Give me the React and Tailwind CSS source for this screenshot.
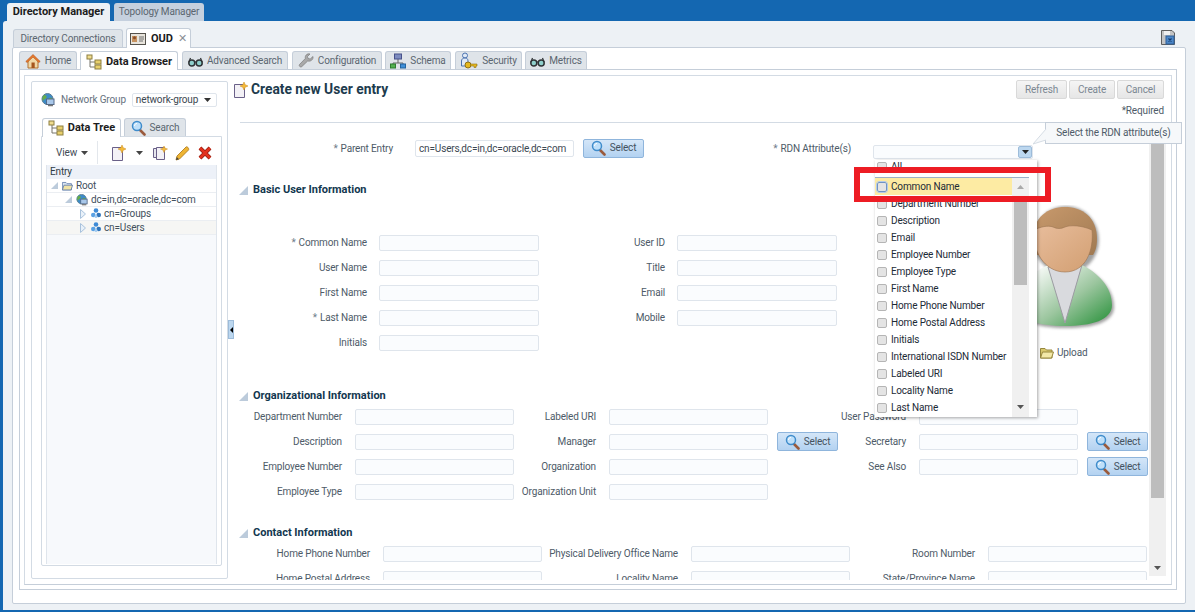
import React from "react";

const Caret = ({ className = "" }) => (
  <svg width="7" height="4" viewBox="0 0 7 4" className={className}><path d="M0 0h7L3.5 4z" fill="currentColor" /></svg>
);

const House = () => (
  <svg width="16" height="16" viewBox="0 0 16 16">
    <path d="M3 8v7h10V8L8 3z" fill="#f0d8a8" stroke="#b3702c" />
    <path d="M0.8 8.5 8 1.5l7.2 7-1.4 1L8 4 2.2 9.5z" fill="#e8792b" stroke="#b0521c" strokeWidth=".6" />
    <rect x="6.5" y="9.5" width="3.2" height="5.5" fill="#a5561e" />
  </svg>
);

const TreeIcon = () => (
  <svg width="16" height="16" viewBox="0 0 16 16">
    <path d="M4 4v9h5M4 8h5" fill="none" stroke="#77746a" />
    <rect x="1" y="1" width="5" height="4" fill="#efdc8e" stroke="#8d7f40" />
    <rect x="9" y="6" width="6" height="4" fill="#e7cf6c" stroke="#8d7f40" />
    <rect x="9" y="11" width="6" height="4" fill="#e7cf6c" stroke="#8d7f40" />
  </svg>
);

const Glasses = () => (
  <svg width="15" height="16" viewBox="0 0 15 16">
    <circle cx="3.8" cy="10" r="3" fill="#8fd0cc" stroke="#2f3336" strokeWidth="1.5" />
    <circle cx="11.2" cy="10" r="3" fill="#8fd0cc" stroke="#2f3336" strokeWidth="1.5" />
    <path d="M1 9 2.5 5M14 9l-1.500-4M6.500 9h2" fill="none" stroke="#2f3336" strokeWidth="1.200" />
  </svg>
);

const Wrench = () => (
  <svg width="16" height="16" viewBox="0 0 16 16">
    <path d="M15 3.500 12.200 6 10 5.500 9.500 3.500 12 1C9 .3 6.800 2.500 7.300 5.500L1.500 11.500c-1 1.200.8 3.200 2.200 2.200L9.700 8C12.800 8.800 15.500 6.500 15 3.500z" fill="#a9a9a9" stroke="#7b7b7b" strokeWidth=".7" />
  </svg>
);

const Network = () => (
  <svg width="16" height="16" viewBox="0 0 16 16">
    <path d="M8 6v4M3 13v-3h10v3" fill="none" stroke="#666" />
    <rect x="4.500" y="1" width="7" height="5" fill="#7d8cc0" stroke="#47518a" />
    <rect x="0.500" y="11" width="5" height="4" fill="#53b04f" stroke="#2d7c30" />
    <rect x="10.500" y="11" width="5" height="4" fill="#3f8fd8" stroke="#22639f" />
  </svg>
);

const Security = () => (
  <svg width="18" height="18" viewBox="0 0 18 18">
    <circle cx="5" cy="3.500" r="2.500" fill="#dfe9f6" stroke="#4a72b0" />
    <path d="M1.500 14V9c0-2 1.500-3 3.500-3s3 1 3 3v5z" fill="#dfe9f6" stroke="#4a72b0" />
    <circle cx="8" cy="13" r="3" fill="#e5b820" stroke="#8f7014" />
    <path d="M10.500 12H17v2h-1v1.500h-2V14h-3.500z" fill="#e5b820" stroke="#8f7014" strokeWidth=".6" />
  </svg>
);

const IdCard = () => (
  <svg width="16" height="12" viewBox="0 0 16 12">
    <rect x=".5" y=".5" width="15" height="11" fill="#e8e4dc" stroke="#55524c" />
    <rect x="2" y="3" width="5" height="6" fill="#c7925f" />
    <circle cx="4.500" cy="4.800" r="1.500" fill="#8a4e2a" />
    <path d="M9 4h5M9 6h5M9 8h4" stroke="#6e6e6e" />
  </svg>
);

const Globe = ({ size = 14 }) => (
  <svg width={size} height={size} viewBox="0 0 14 14">
    <circle cx="6.500" cy="6" r="5.500" fill="#3d8bc9" stroke="#5b7d92" />
    <path d="M3 2c2 0 3 1 2.500 2.500S3 6 2 8C1 6 1 4 3 2zM8 5c2-.5 3 0 3.500 1-.5 2-2 3.500-3 4C7.500 8 7 6.500 8 5z" fill="#66ad4b" />
    <rect x="5.500" y="6" width="7.500" height="5.500" fill="#a9c8ea" stroke="#546b8a" />
    <path d="M7 12.500h5" stroke="#777" strokeWidth="1.500" />
  </svg>
);

const Magnifier = () => (
  <svg width="15" height="16" viewBox="0 0 15 16">
    <path d="m8.500 9.500 5 5" stroke="#9a5a3c" strokeWidth="2.600" strokeLinecap="round" />
    <circle cx="6" cy="6" r="4.500" fill="#bfe0fa" stroke="#3f8ccb" strokeWidth="1.500" />
    <path d="M3.500 6c0-1.500 1-2.500 2.500-2.500" stroke="#fff" fill="none" />
  </svg>
);

const NewDoc = () => (
  <svg width="16" height="16" viewBox="0 0 16 16">
    <path d="M1.500 2.500h10v13h-10z" fill="#f3f1f6" stroke="#6a6088" />
    <path d="m11 0 1.200 2.700L15 4l-2.800 1.200L11 8 9.800 5.200 7 4l2.800-1.300z" fill="#f4b93a" stroke="#c98a1b" strokeWidth=".5" />
  </svg>
);

const CopyDoc = () => (
  <svg width="15" height="15" viewBox="0 0 15 15">
    <path d="M.500 3.500h7v9h-7z" fill="#e6e6ee" stroke="#6a6088" />
    <path d="M3.500 2.500h8v12h-8z" fill="#f3f1f6" stroke="#6a6088" />
    <path d="m11 1 1 2.200L14.500 4l-2.500 1-1 2.500-1-2.500L7.500 4 10 3.200z" fill="#f4b93a" stroke="#c98a1b" strokeWidth=".5" />
  </svg>
);

const Pencil = () => (
  <svg width="16" height="16" viewBox="0 0 16 16">
    <path d="M1 15l1-4 9-9c1-1 3.500 1.500 2.500 3l-9 9z" fill="#eeb433" stroke="#a87518" strokeWidth=".8" />
    <path d="M1 15l.8-3 2.200 2.200z" fill="#444" />
  </svg>
);

const RedX = () => (
  <svg width="14" height="14" viewBox="0 0 14 14">
    <path d="M2 2l10 10M12 2 2 12" stroke="#8f1d10" strokeWidth="4" />
    <path d="M2 2l10 10M12 2 2 12" stroke="#e2311d" strokeWidth="2.600" />
  </svg>
);

const FolderIcon = ({ light }) => (
  <svg width={light ? 11 : 14} height={light ? 10 : 12} viewBox="0 0 14 12">
    <path d="M.500 11V1.500h4.500l1.500 1.500h5.500v8z" fill={light ? "#d8e3ef" : "#d9c96e"} stroke={light ? "#5b78a8" : "#96873d"} />
    <path d="M.500 11l2-6h11l-2 6z" fill={light ? "#f0e3a6" : "#f3e9a8"} stroke={light ? "#5b78a8" : "#96873d"} />
  </svg>
);

const SaveIcon = () => (
  <svg width="14" height="15" viewBox="0 0 14 15">
    <path d="M.500.500h10.500l2.500 2.500v11.500H.500z" fill="#c4c4c4" stroke="#5e5e5e" />
    <rect x="3" y="1" width="6" height="4" fill="#efefef" />
    <rect x="5" y="6" width="8" height="8" fill="#4c86c6" stroke="#2c5f9a" />
    <path d="M7.500 8.500l3 3M10.500 8.500l-3 3" stroke="#123a6e" strokeWidth="1.200" />
  </svg>
);

const Triangle = () => (
  <svg width="9" height="9" viewBox="0 0 9 9"><path d="M9 0v9H0z" fill="#bccbdb" /></svg>
);

const boldText = "font-bold text-[11px] tracking-normal";
const tabBase = "flex items-center gap-[4px] rounded-t-[3px] border border-b-0 whitespace-nowrap";

const Tab = ({ icon, label, active, w, extra = "" }) => (
  <div
    className={`${tabBase} ${w} ${extra} justify-center ${
      active ? `bg-white border-[#c5ced9] ${boldText} text-[#1c1c1c] relative z-10 h-[19px] -mb-px` : "h-[18px] bg-[#dfe4e9] border-[#c5ced9] text-[#5b6670]"
    }`}
  >
    {icon}
    {label}
  </div>
);

const Input = ({ w = "w-[159px]" }) => (
  <div className={`${w} h-[16px] bg-[#fafcfe] border border-[#dfe5ec] rounded-[2px]`} />
);

const SelectBtn = () => (
  <div className="w-[61px] h-[19px] flex items-center justify-center gap-[4px] rounded-[2px] border border-[#8fb5dc] bg-[linear-gradient(#d4e6f8,#b3d2f1)] text-[#44525f]">
    <Magnifier />
    Select
  </div>
);

const Label = ({ children, req, pr = "pr-[13px]" }) => (
  <div className={`${pr} text-right text-[#4e5b68] whitespace-nowrap`}>
    {req && <span className="text-[#6f7d8a] mr-[3px]">*</span>}
    {children}
  </div>
);

const SectionHead = ({ title, className = "" }) => (
  <div className={`flex items-center gap-[5px] h-[14px] pl-[5px] ${boldText} text-[#12374f] ${className}`}>
    <Triangle />
    {title}
  </div>
);

const ActionBtn = ({ label, w }) => (
  <div className={`${w} h-[19px] flex items-center justify-center rounded-[2px] border border-[#d9d9d9] bg-[linear-gradient(#f5f5f5,#e6e6e6)] text-[#7b8792]`}>
    {label}
  </div>
);

const Avatar = () => (
  <svg width="100" height="130" viewBox="0 0 100 130">
    <defs>
      <linearGradient id="bodyGrad" x1="0.1" y1="0.1" x2="1" y2="0.9">
        <stop offset="0" stopColor="#ffffff" />
        <stop offset=".55" stopColor="#9cc69f" />
        <stop offset="1" stopColor="#2f9440" />
      </linearGradient>
      <linearGradient id="faceGrad" x1="0" y1="0" x2="1" y2="1">
        <stop offset="0" stopColor="#e8bd9c" />
        <stop offset="1" stopColor="#d29f72" />
      </linearGradient>
      <linearGradient id="hairGrad" x1="0" y1="0" x2="1" y2="1">
        <stop offset="0" stopColor="#c99a6d" />
        <stop offset="1" stopColor="#a07a52" />
      </linearGradient>
      <filter id="soft" x="-10%" y="-10%" width="120%" height="120%">
        <feGaussianBlur stdDeviation="1.800" />
      </filter>
    </defs>
    <g filter="url(#soft)" fill="#555" opacity=".55">
      <path d="M48 123C20 123 1 117 1 102C1 84 15 70 31 62H65C81 70 96 84 96 102C96 117 76 123 48 123z" />
      <ellipse cx="48" cy="35" rx="33" ry="34" />
    </g>
    <path d="M47 121C20 121 0 115 0 100C0 82 14 68 30 60L47 118L64 60C80 68 94 82 94 100C94 115 74 121 47 121z" fill="url(#bodyGrad)" />
    <path d="M30 62 47 118 64 60z" fill="#d9dade" stroke="#9c9ca2" />
    <path d="M15 34C15 12 30 2 47 2s32 10 32 32c0 8-2 13-4 16H19c-2-4-4-8-4-16z" fill="url(#hairGrad)" />
    <path d="M16 25c6-3 14-5 19-3 4 2 8 2 12 0 5-2 16-2 27 3 2 20-6 42-27 42S14 45 16 25z" fill="url(#faceGrad)" stroke="#9b7350" strokeWidth=".6" />
  </svg>
);

const TreeRow = ({ indent, toggle, icon, label, alt }) => (
  <div className={`flex items-center h-[14px] border-b border-[#ebeef2] whitespace-nowrap text-[#43505c] ${indent} ${alt ? "bg-[#f6f6f4]" : "bg-white"}`}>
    {toggle === "open" ? (
      <svg width="7" height="7" viewBox="0 0 7 7" className="mr-[4px]"><path d="M7 0v7H0z" fill="#bccbdb" /></svg>
    ) : (
      <svg width="6" height="10" viewBox="0 0 6 10" className="mr-[5px]"><path d="M.500.500 5.500 5 .500 9.500z" fill="#e9f1f9" stroke="#a9c2dc" /></svg>
    )}
    {icon}
    <span className="ml-[3px]">{label}</span>
  </div>
);

const Cluster = () => (
  <svg width="10" height="11" viewBox="0 0 10 11">
    <circle cx="5" cy="2.500" r="2.300" fill="#3f8bd6" />
    <circle cx="2.300" cy="7" r="2.300" fill="#5aa1e3" />
    <circle cx="7.700" cy="7" r="2.300" fill="#2f74bb" />
    <circle cx="5" cy="8.500" r="1.500" fill="#a5cdf2" />
  </svg>
);

const rdnOptions = [
  "Department Number", "Description", "Email", "Employee Number", "Employee Type", "First Name",
  "Home Phone Number", "Home Postal Address", "Initials", "International ISDN Number", "Labeled URI",
  "Locality Name", "Last Name",
];

const Check = ({ focus }) => (
  <div className={`w-[10px] h-[10px] shrink-0 rounded-[2px] border bg-[#e4e4e4] ${focus ? "border-[#6f93c4] outline outline-1 outline-[#b6cbe6]" : "border-[#b5b5b5]"}`} />
);

const App = () => {
  return (
    <div className="relative w-[1195px] h-[612px] overflow-hidden bg-[#1467b1] font-['Roboto','Noto_Sans',sans-serif] text-[10px] tracking-[-0.15px] leading-[14px]">
      {/* top tabs */}
      <div className="flex items-end gap-[4px] h-[21px] pl-[7px] whitespace-nowrap">
        <div className={`w-[103px] h-[18px] flex items-center justify-center rounded-t-[3px] bg-[#edf1f5] ${boldText} text-[#1c1c1c]`}>Directory Manager</div>
        <div className="w-[90px] h-[18px] flex items-center justify-center rounded-t-[3px] bg-[#c5d0de] text-[#5b6670]">Topology Manager</div>
      </div>

      <div className="ml-[3px] h-[589px] bg-[#edf1f5] rounded-tl-[3px] pl-[9px] pr-[9px] pt-[7px]">
        {/* connection tabs */}
        <div className="flex items-end h-[19px] gap-[3px] pl-[1px]">
          <Tab label="Directory Connections" w="w-[110px]" />
          <div className={`w-[65px] h-[20px] -mb-px relative z-10 flex items-center justify-center gap-[5px] rounded-t-[3px] border border-b-0 border-[#c5ced9] bg-white ${boldText} text-[#1c1c1c]`}>
            <IdCard />
            OUD
            <span className="text-[#8a8f96] font-normal text-[11px]">✕</span>
          </div>
          <div className="ml-auto mr-[11px] mb-[2px]"><SaveIcon /></div>
        </div>

        <div className="h-[557px] bg-white border border-[#c5ced9] rounded-[2px] pl-[6px] pr-[8px] pt-[3px]">
          {/* main tabs */}
          <div className="flex items-end gap-[3px] h-[18px]">
            <Tab icon={<House />} label="Home" w="w-[58px]" extra="pt-px" />
            <Tab icon={<TreeIcon />} label="Data Browser" w="w-[98px]" active extra="pt-px" />
            <Tab icon={<Glasses />} label="Advanced Search" w="w-[106px]" extra="ml-[1px] pt-px" />
            <Tab icon={<Wrench />} label="Configuration" w="w-[90px]" extra="ml-[1px] pt-px" />
            <Tab icon={<Network />} label="Schema" w="w-[66px]" extra="pt-px" />
            <Tab icon={<Security />} label="Security" w="w-[67px]" extra="ml-[1px] pt-px" />
            <Tab icon={<Glasses />} label="Metrics" w="w-[62px]" extra="pt-px" />
          </div>

          <div className="h-[521px] border border-[#c5ced9] px-[4px] pt-[5px] pb-[4px]">
            <div className="flex h-[510px] border border-[#d3dbe4] border-b-[#c5ced9] pl-[6px] pt-[5px] pb-[6px]">
              {/* left pane */}
              <div className="w-[197px] h-[498px] shrink-0 border border-[#d3dbe4] rounded-[2px]">
                <div className="flex items-center h-[17px] mt-[9px] pl-[9px] whitespace-nowrap">
                  <Globe size={14} />
                  <span className="ml-[6px] text-[#66727e]">Network Group</span>
                  <div className="ml-[6px] w-[85px] h-[14px] flex items-center justify-between px-[3px] rounded-[2px] border border-[#dfe5ec] text-[#3c4852]">
                    network-group
                    <Caret className="text-[#333] mr-[2px]" />
                  </div>
                </div>
                <div className="flex items-end gap-[3px] h-[18px] mt-[10px] ml-[10px]">
                  <Tab icon={<TreeIcon />} label="Data Tree" w="w-[79px]" active />
                  <Tab icon={<Magnifier />} label="Search" w="w-[62px]" />
                </div>
                <div className="ml-[9px] w-[181px] h-[430px] border border-[#d3dbe4] rounded-b-[2px] px-[4px] pt-[4px]">
                  <div className="flex items-center h-[23px] text-[#3f4b56]">
                    <div className="flex items-center gap-[4px] w-[52px] h-full pl-[10px] border-r border-[#e3e7ec]">
                      View
                      <Caret className="text-[#444]" />
                    </div>
                    <div className="ml-[13px]"><NewDoc /></div>
                    <Caret className="ml-[9px] text-[#444]" />
                    <div className="ml-[10px]"><CopyDoc /></div>
                    <div className="ml-[7px]"><Pencil /></div>
                    <div className="ml-[7px]"><RedX /></div>
                  </div>
                  <div className="h-[399px] mt-px bg-[#f7f9fc] border-x border-[#dfe5ec]">
                    <div className="h-[14px] flex items-center pl-[3px] bg-[#edf1f8] text-[#2f3b45]">Entry</div>
                    <TreeRow indent="pl-[4px]" toggle="open" icon={<FolderIcon light />} label="Root" />
                    <TreeRow indent="pl-[18px]" toggle="open" icon={<Globe size={12} />} label="dc=in,dc=oracle,dc=com" />
                    <TreeRow indent="pl-[33px]" icon={<Cluster />} label="cn=Groups" />
                    <TreeRow indent="pl-[33px]" icon={<Cluster />} label="cn=Users" alt />
                  </div>
                </div>
              </div>

              {/* splitter */}
              <div className="w-[6px] shrink-0 flex items-center">
                <div className="w-[6px] h-[19px] flex items-center justify-center bg-[#bcd7ef] border border-[#9dbcda] text-black">
                  <svg width="3" height="6" viewBox="0 0 3 6"><path d="M3 0v6L0 3z" fill="currentColor" /></svg>
                </div>
              </div>

              {/* right pane */}
              <div className="flex-1 min-w-0 flex flex-col h-[504px] -mt-[5px]">
                <div className="flex justify-between h-[46px] pr-[7px] pt-[4px] shrink-0">
                  <div className="flex items-center h-[19px] gap-[2px] -ml-px">
                    <NewDoc />
                    <span className="text-[13.8px] tracking-normal font-bold text-[#203b4d] -mt-[2px]">Create new User entry</span>
                  </div>
                  <div className="flex flex-col items-end">
                    <div className="flex gap-[2px]">
                      <ActionBtn label="Refresh" w="w-[51px]" />
                      <ActionBtn label="Create" w="w-[46px]" />
                      <ActionBtn label="Cancel" w="w-[47px]" />
                    </div>
                    <div className="mt-[5px] text-[#4e5b68]">*Required</div>
                  </div>
                </div>
                <div className="h-px ml-[6px] bg-[#d3dbe4] shrink-0" />

                <div className="flex flex-1 min-h-0 overflow-hidden">
                  <div className="flex-1 min-w-0">
                    <div className="flex items-center h-[20px] mt-[15px]">
                      <div className="w-[172px] pt-px"><Label req>Parent Entry</Label></div>
                      <div className="ml-[9px] w-[159px] h-[17px] pt-px px-[3px] flex items-center bg-white border border-[#dfe5ec] rounded-[2px] whitespace-nowrap overflow-hidden text-[#3c4852]">cn=Users,dc=in,dc=oracle,dc=com</div>
                      <div className="ml-[9px]"><SelectBtn /></div>
                      <div className="w-[220px] pt-px"><Label req>RDN Attribute(s)</Label></div>
                    </div>

                    <SectionHead title="Basic User Information" className="mt-[25px]" />
                    <div className="flex mt-[33px]">
                      <div className="grid grid-cols-[145px_160px_138px_160px] auto-rows-[25px] items-center">
                        <Label req pr="pr-[12px]">Common Name</Label><Input w="w-[160px]" />
                        <Label pr="pr-[12px]">User ID</Label><Input w="w-[160px]" />
                        <Label pr="pr-[12px]">User Name</Label><Input w="w-[160px]" />
                        <Label pr="pr-[12px]">Title</Label><Input w="w-[160px]" />
                        <Label pr="pr-[12px]">First Name</Label><Input w="w-[160px]" />
                        <Label pr="pr-[12px]">Email</Label><Input w="w-[160px]" />
                        <Label req pr="pr-[12px]">Last Name</Label><Input w="w-[160px]" />
                        <Label pr="pr-[12px]">Mobile</Label><Input w="w-[160px]" />
                        <Label pr="pr-[12px]">Initials</Label><Input w="w-[160px]" />
                      </div>
                      <div className="ml-[181px] -mt-[25px] h-[150px]">
                        <Avatar />
                        <div className="flex items-center gap-[3px] ml-[22px] mt-[11px] text-[#4e5b68]">
                          <FolderIcon />
                          Upload
                        </div>
                      </div>
                    </div>

                    <SectionHead title="Organizational Information" className="mt-[34px]" />
                    <div className="grid grid-cols-[121px_159px_95px_159px_70px_81px_159px_70px] auto-rows-[25px] items-center mt-[1px]">
                      <Label>Department Number</Label><Input />
                      <Label>Labeled URI</Label><Input /><div />
                      <Label>User Password</Label><Input /><div />
                      <Label>Description</Label><Input />
                      <Label>Manager</Label><Input /><div className="pl-[9px]"><SelectBtn /></div>
                      <Label>Secretary</Label><Input /><div className="pl-[9px]"><SelectBtn /></div>
                      <Label>Employee Number</Label><Input />
                      <Label>Organization</Label><Input /><div />
                      <Label>See Also</Label><Input /><div className="pl-[9px]"><SelectBtn /></div>
                      <Label>Employee Type</Label><Input />
                      <Label>Organization Unit</Label><Input />
                    </div>

                    <SectionHead title="Contact Information" className="mt-[22px]" />
                    <div className="grid grid-cols-[149px_159px_149px_159px_138px_159px] auto-rows-[25px] items-center mt-[1px]">
                      <Label>Home Phone Number</Label><Input />
                      <Label>Physical Delivery Office Name</Label><Input />
                      <Label>Room Number</Label><Input />
                      <Label>Home Postal Address</Label><Input />
                      <Label>Locality Name</Label><Input />
                      <Label>State/Province Name</Label><Input />
                    </div>
                  </div>

                  {/* form scrollbar */}
                  <div className="w-[17px] mr-[5px] mb-[4px] shrink-0 flex flex-col items-center bg-[#f0f0f0] px-[2px]">
                    <div className="w-[13px] h-[375px] bg-[#bdbdbd]" />
                    <Caret className="mt-auto mb-[6px] text-[#555]" />
                  </div>
                </div>
              </div>
            </div>
          </div>
        </div>
      </div>

      {/* RDN combobox + open list */}
      <div className="absolute left-[873px] top-[145px] w-[160px] h-[14px] bg-[#fafcfe] border border-[#dfe5ec] rounded-[2px] flex justify-end items-center">
        <div className="w-[14px] h-[12px] flex items-center justify-center bg-[#bcd7ef] border border-[#9dbcda] rounded-[2px] text-[#222]"><Caret /></div>
      </div>
      <div className="absolute left-[875px] top-[160px] w-[162px] h-[257px] bg-white shadow-[1px_1px_3px_rgba(0,0,0,0.35)] text-[#1c2a36]">
        <div className="absolute left-[137px] top-[35px] w-[17px] h-[222px] bg-[#f0f0f0]">
          <div className="mx-[2px] mt-[1px] h-[89px] w-[13px] bg-[#bdbdbd]" />
        </div>
        <div className="flex items-center gap-[4px] h-[14px] pl-[2px]"><Check />All</div>
        <div className="flex items-center h-[18px] mt-[3px] w-[154px] border-t border-[#9ab0c9]">
          <div className="flex items-center gap-[4px] w-[137px] h-full pl-[2px] bg-[#fdeba3]"><Check focus />Common Name</div>
          <div className="flex justify-center w-[17px] h-full items-center bg-[#f0f0f0]"><Caret className="rotate-180 text-[#aaa]" /></div>
        </div>
        <div className="w-[137px]">
          {rdnOptions.map((name) => (
            <div key={name} className="flex items-center gap-[4px] h-[17px] pl-[2px] whitespace-nowrap">
              <Check />
              {name}
            </div>
          ))}
        </div>
        <Caret className="absolute left-[142px] top-[245px] text-[#555]" />
      </div>

      {/* tooltip */}
      <div className="absolute left-[1045px] top-[122px] w-[137px] h-[22px] flex items-center justify-center bg-[#f6f8fa] border border-[#c5ced9] text-[#4e5b68]">
        Select the RDN attribute(s)
      </div>
      <svg width="14" height="16" viewBox="0 0 14 16" className="absolute left-[1033px] top-[129px]">
        <path d="M13 0 0 15 13 11z" fill="#f6f8fa" />
        <path d="M13 0 0 15 13 11" fill="none" stroke="#d5dce4" />
      </svg>

      {/* red highlight added on the screenshot */}
      <div className="absolute left-[854px] top-[167px] w-[197px] h-[35px] border-[6px] border-[#ed1c24]" />
    </div>
  );
};

export default App;
